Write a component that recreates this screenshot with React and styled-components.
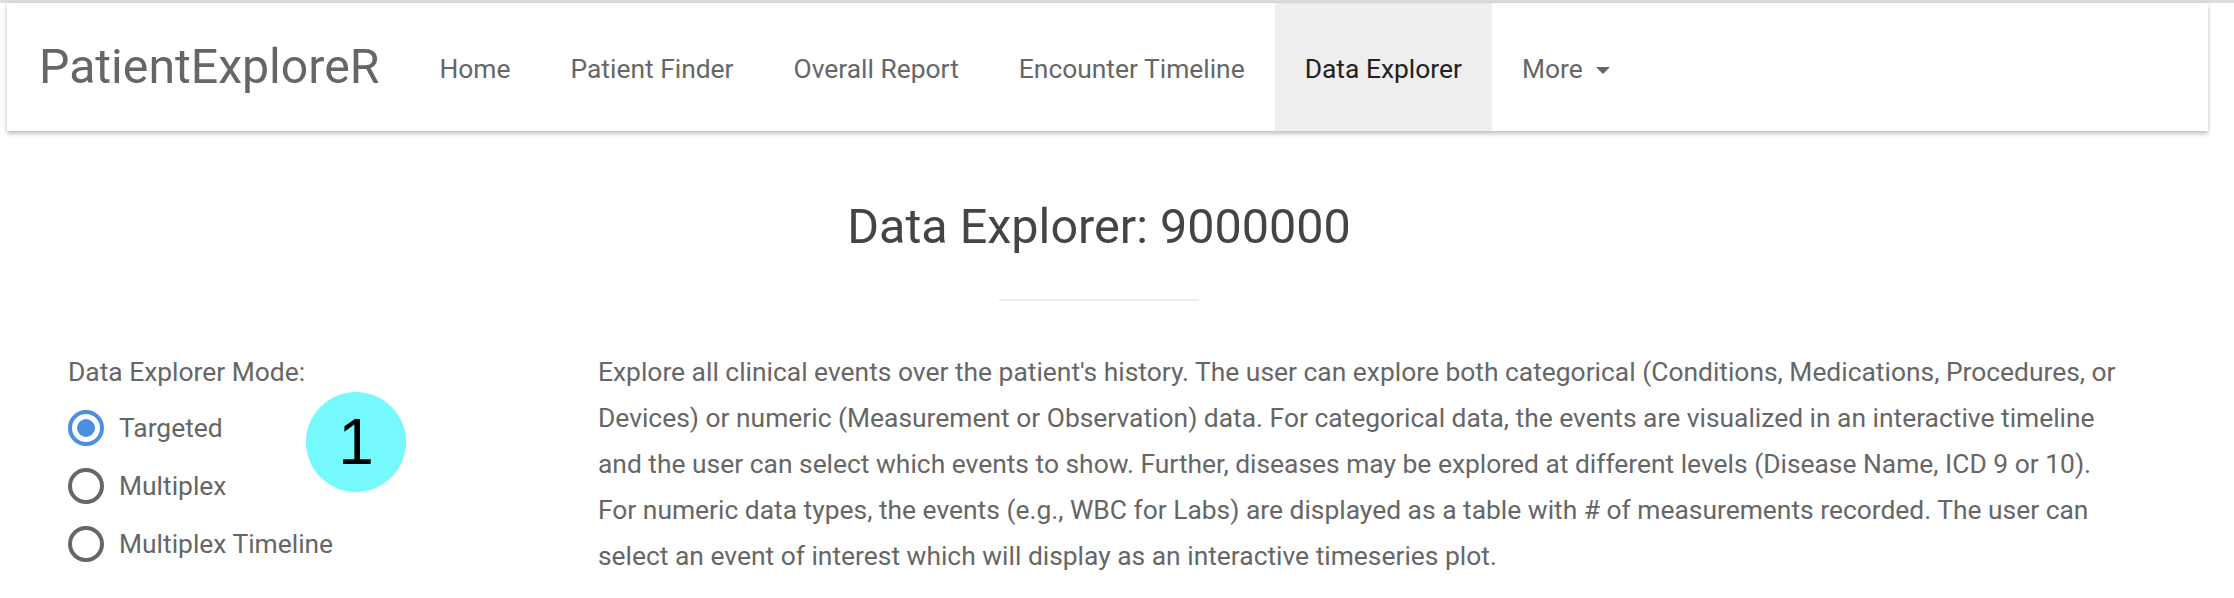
import React from "react";
import styled, { createGlobalStyle } from "styled-components";

const GlobalStyle = createGlobalStyle`
  html, body {
    margin: 0;
    padding: 0;
    background: #fff;
  }
  body {
    font-family: Roboto, "Helvetica Neue", Arial, sans-serif;
    color: #666;
  }
  * {
    box-sizing: border-box;
  }
`;

const TopBand = styled.div`
  height: 3px;
  background: #dadee2;
`;

const Navbar = styled.nav`
  display: flex;
  align-items: stretch;
  height: 128px;
  margin: 0 26px 0 7px;
  padding-left: 2px;
  background: #fff;
  box-shadow: 0 3px 4px rgba(0, 0, 0, 0.22), 0 0 4px rgba(0, 0, 0, 0.08);
`;

const Brand = styled.a`
  padding: 0 30px;
  font-size: 48.2px;
  line-height: 128px;
  color: #666;
  text-decoration: none;
  white-space: nowrap;
`;

const NavList = styled.ul`
  display: flex;
  list-style: none;
  margin: 0;
  padding: 0;
`;

const NavItem = styled.li`
  display: flex;
  align-items: center;
  padding: 42px 30px 38px;
  font-size: 26.4px;
  line-height: 48px;
  white-space: nowrap;
  color: ${(p) => (p.$active ? "#212121" : "#666")};
  background: ${(p) => (p.$active ? "#eee" : "transparent")};
`;

const Caret = styled.span`
  display: inline-block;
  width: 0;
  height: 0;
  margin-left: 13px;
  margin-top: 2px;
  border-top: 7px solid #666;
  border-left: 7px solid transparent;
  border-right: 7px solid transparent;
`;

const Header = styled.header`
  text-align: center;
  padding-right: 36px;
`;

const Title = styled.h2`
  margin: 68px 0 0;
  font-size: 48.5px;
  line-height: 56px;
  font-weight: 400;
  color: #444;
`;

const Rule = styled.hr`
  width: 200px;
  height: 2px;
  margin: 44px auto 0;
  border: 0;
  background: #eee;
`;

const Content = styled.section`
  display: grid;
  grid-template-columns: 530px 1fr;
  margin-top: 48px;
  padding: 0 104px 0 68px;
`;

const Sidebar = styled.div`
  position: relative;
`;

const FieldLabel = styled.div`
  font-size: 26.4px;
  line-height: 46px;
  color: #666;
`;

const RadioGroup = styled.div`
  display: flex;
  flex-direction: column;
  margin-top: 4px;
`;

const RadioRow = styled.label`
  display: flex;
  align-items: center;
  gap: 15px;
  height: 58px;
  font-size: 26.4px;
  line-height: 46px;
  color: #666;
`;

const RadioCircle = styled.span`
  position: relative;
  width: 36px;
  height: 36px;
  flex: none;
  border-radius: 50%;
  border: 4px solid ${(p) => (p.$checked ? "#4a90e2" : "#666")};

  &::after {
    content: "";
    display: ${(p) => (p.$checked ? "block" : "none")};
    position: absolute;
    left: 5px;
    top: 5px;
    width: 18px;
    height: 18px;
    border-radius: 50%;
    background: #4a90e2;
  }
`;

const StepBadge = styled.div`
  position: absolute;
  left: 238px;
  top: 43px;
  width: 100px;
  height: 100px;
  border-radius: 50%;
  background: #75f9fc;
  color: #000;
  display: flex;
  align-items: center;
  justify-content: center;
  font-family: "Liberation Sans", Arial, sans-serif;
  font-size: 64px;
  line-height: 1;
`;

const Description = styled.p`
  margin: 0;
  font-size: 26.4px;
  line-height: 46px;
  color: #666;
`;

const links = [
  { label: "Home" },
  { label: "Patient Finder" },
  { label: "Overall Report" },
  { label: "Encounter Timeline" },
  { label: "Data Explorer", active: true },
];

const modes = [
  { label: "Targeted", checked: true },
  { label: "Multiplex" },
  { label: "Multiplex Timeline" },
];

export default function App() {
  return (
    <>
      <GlobalStyle />
      <TopBand />
      <Navbar>
        <Brand>PatientExploreR</Brand>
        <NavList>
          {links.map((l) => (
            <NavItem key={l.label} $active={l.active}>
              {l.label}
            </NavItem>
          ))}
          <NavItem>
            More
            <Caret />
          </NavItem>
        </NavList>
      </Navbar>

      <Header>
        <Title>Data Explorer: 9000000</Title>
        <Rule />
      </Header>

      <Content>
        <Sidebar>
          <FieldLabel>Data Explorer Mode:</FieldLabel>
          <RadioGroup>
            {modes.map((m) => (
              <RadioRow key={m.label}>
                <RadioCircle $checked={m.checked} />
                {m.label}
              </RadioRow>
            ))}
          </RadioGroup>
          <StepBadge>1</StepBadge>
        </Sidebar>
        <Description>
          Explore all clinical events over the patient's history. The user can
          explore both categorical (Conditions, Medications, Procedures, or
          Devices) or numeric (Measurement or Observation) data. For
          categorical data, the events are visualized in an interactive
          timeline and the user can select which events to show. Further,
          diseases may be explored at different levels (Disease Name, ICD 9 or
          10). For numeric data types, the events (e.g., WBC for Labs) are
          displayed as a table with # of measurements recorded. The user can
          select an event of interest which will display as an interactive
          timeseries plot.
        </Description>
      </Content>
    </>
  );
}
